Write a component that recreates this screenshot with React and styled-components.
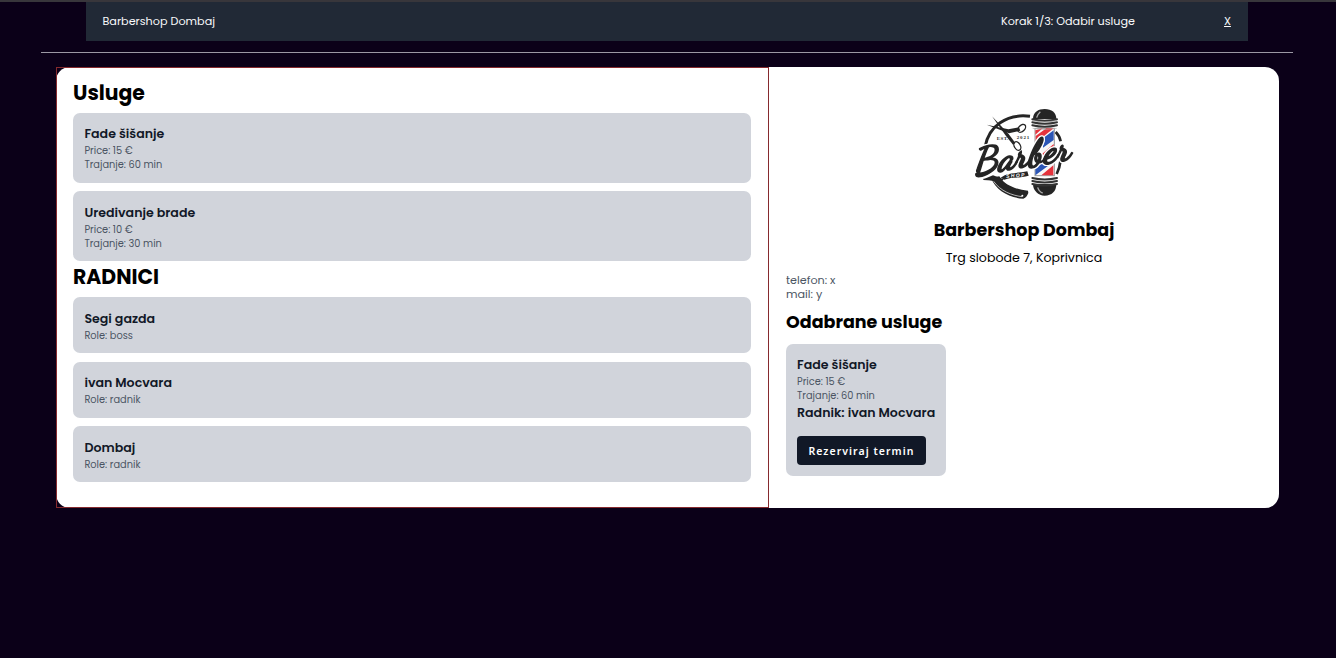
import React from "react";
import styled, { createGlobalStyle } from "styled-components";

const GlobalStyle = createGlobalStyle`
  * { box-sizing: border-box; margin: 0; padding: 0; }
  body {
    background: #0b0018;
    font-family: Poppins, "Open Sans", sans-serif;
    color: #000;
  }
`;

const Page = styled.div`
  display: flex;
  flex-direction: column;
  min-height: 658px;
  border-top: 2px solid #38363b;
`;

const Navbar = styled.nav`
  display: flex;
  align-items: center;
  width: 1162px;
  height: 39px;
  margin-left: 86px;
  padding: 0 16px 0 16.5px;
  background: #212936;
  color: #f9fafb;
  font-size: 11.2px;
  white-space: nowrap;
`;

const Step = styled.div`
  width: 223px;
  margin-left: auto;
`;

const Close = styled.a`
  width: 8px;
  text-decoration: underline;
`;

const Divider = styled.hr`
  width: 1252px;
  height: 1px;
  margin: 11px 0 14px 41px;
  border: 0;
  background: #9c98a4;
`;

const Panel = styled.main`
  display: flex;
  width: 1223px;
  height: 441.4px;
  margin-left: 56px;
  border-radius: 14px;
  background: #fff;
`;

const Choices = styled.section`
  width: 713px;
  padding: 10px 17px 0 16px;
  border: 1px solid #862a2e;
`;

const SectionTitle = styled.h2`
  height: 28px;
  margin-bottom: 7px;
  padding-top: 0.6px;
  font-size: 20.4px;
  line-height: 28px;
  font-weight: 700;
`;

const List = styled.div`
  display: flex;
  flex-direction: column;
  gap: 8.4px;
  margin-bottom: 1px;
`;

const Card = styled.article`
  padding: 11.4px 11.4px 10.6px;
  border-radius: 7px;
  background: #d1d4db;
`;

const CardTitle = styled.h3`
  font-size: 12.6px;
  line-height: 20px;
  font-weight: 600;
  color: #111827;
  white-space: nowrap;
`;

const Detail = styled.p`
  font-size: 9.8px;
  line-height: 14px;
  color: #4b5563;
`;

const Contact = styled(Detail)`
  font-size: 11.2px;
`;

const Summary = styled.section`
  flex: 1;
  display: flex;
  flex-direction: column;
  padding: 33px 0 0 17px;
`;

const Intro = styled.header`
  display: flex;
  flex-direction: column;
  align-items: center;
  padding-right: 17px;
`;

const ShopName = styled.h1`
  margin-top: 11px;
  font-size: 17.5px;
  line-height: 28px;
  font-weight: 700;
`;

const Address = styled.p`
  margin-top: 5px;
  margin-bottom: 6px;
  font-size: 12.6px;
  line-height: 18px;
`;

const Chosen = styled.h2`
  margin: 7px 0 8px;
  font-size: 17.5px;
  line-height: 28px;
  font-weight: 700;
`;

const BookingCard = styled(Card)`
  width: 160px;
  height: 132px;
  padding: 11px;
`;

const BookButton = styled.button`
  display: block;
  width: 129px;
  height: 29px;
  margin-top: 13px;
  border: 0;
  border-radius: 4px;
  background: #111827;
  color: #fff;
  font: 600 10.5px "Noto Sans", sans-serif;
  letter-spacing: 1.05px;
`;

const Wordmark = styled.g`
  filter: drop-shadow(3px 0 0 #fff) drop-shadow(-3px 0 0 #fff)
    drop-shadow(0 3px 0 #fff) drop-shadow(0 -3px 0 #fff);
`;

const Logo = () => (
  <svg width="130" height="105" viewBox="0 0 390 315" fill="none">
    <path d="M78 142 C88 78 144 40 213 49" stroke="#252525" strokeWidth="9" />
    <path d="M305 180 C303 198 299 210 293 222 M290 96 Q302 108 305 124" stroke="#252525" strokeWidth="8" />
    <path d="M222 57 C222 36 238 27 257 27 C278 27 292 38 292 57Z" fill="#252525" />
    <path d="M244 35 Q236 42 233 53" stroke="#aaa" strokeWidth="4" />
    <path d="M222 252 C222 272 238 287 257 287 C278 287 292 274 292 252Z" fill="#252525" />
    <path d="M236 262 Q240 275 251 279" stroke="#aaa" strokeWidth="4" />
    <rect x="228" y="85" width="58" height="142" fill="#f7f7f7" stroke="#999" strokeWidth="3" />
    <path d="M229 91 L251 85 L229 104Z M262 85 L284 85 L230 128 L230 108Z M229 179 L284 132 L284 145 L229 190Z M283 196 L283 226 L247 226Z" fill="#e5333c" />
    <path d="M284 91 V120 L252 143 V115Z M229 203 L250 188 L282 187 L229 226Z" fill="#2b55b5" />
    {[58, 67, 76, 234, 243, 252].map((y) => (
      <path key={y} d={`M220 ${y} Q257 ${y + 9} 294 ${y}`} stroke="#333" strokeWidth="6" strokeLinecap="round" />
    ))}
    <path d="M221 85 Q257 92 293 85 M220 62 Q257 71 294 62" stroke="#aaa" strokeWidth="2" />
    <path d="M99 49 L149 102 L169 129 L162 134 L141 108Z" fill="#252525" />
    <path d="M83 74 L148 88 L180 82 L184 92 L150 100Z" fill="#252525" />
    <ellipse cx="188" cy="85" rx="14" ry="9" transform="rotate(-45 188 85)" stroke="#252525" strokeWidth="4" />
    <g fill="#333" fontFamily="Liberation Serif, serif" fontWeight="700" fontSize="15">
      <text x="113" y="119" textLength="35">EST.</text>
      <text x="173" y="118" textLength="38">2021</text>
    </g>
    <path d="M75 237 L102 226 L134 238 L126 247Z" fill="#252525" />
    <path d="M73 238 L111 240" stroke="#252525" strokeWidth="4" />
    <path d="M96 233 L121 229 C137 256 169 268 207 272 L208 279 C205 286 201 294 193 296 C150 294 110 270 96 233Z" fill="#252525" />
    <path d="M104 244 C124 273 158 286 189 290" stroke="#fff" strokeWidth="2" />
    <circle cx="190" cy="287" r="3" fill="#fff" />
    <path d="M125 233 C150 214 180 221 205 214 L209 227 C183 235 157 230 136 239Z" fill="#252525" />
    <text x="142" y="234" transform="rotate(-5 142 234)" fill="#fff" fontFamily="Liberation Sans, sans-serif" fontStyle="italic" fontWeight="700" fontSize="15" textLength="55">SHOP</text>
    <Wordmark>
      <text
        transform="translate(46 223) rotate(-9) skewX(-12)"
        fill="#252525"
        stroke="#252525"
        strokeWidth="4.5"
        strokeLinejoin="round"
        fontFamily="'Dancing Script', Lobster, 'Liberation Serif', serif"
        fontWeight="700"
        fontSize="110"
        textLength="292"
        lengthAdjust="spacingAndGlyphs"
      >
        Barber
      </text>
    </Wordmark>
    <ellipse cx="175" cy="138" rx="9" ry="14" transform="rotate(-30 175 138)" stroke="#252525" strokeWidth="4" />
    <path d="M183 148 Q190 151 187 158" stroke="#252525" strokeWidth="3" />
  </svg>
);

const services = [
  { name: "Fade šišanje", price: "Price: 15 €", time: "Trajanje: 60 min" },
  { name: "Uredivanje brade", price: "Price: 10 €", time: "Trajanje: 30 min" },
];

const workers = [
  { name: "Segi gazda", role: "Role: boss" },
  { name: "ivan Mocvara", role: "Role: radnik" },
  { name: "Dombaj", role: "Role: radnik" },
];

export default function App() {
  return (
    <Page>
      <GlobalStyle />
      <Navbar>
        <span>Barbershop Dombaj</span>
        <Step>Korak 1/3: Odabir usluge</Step>
        <Close>X</Close>
      </Navbar>
      <Divider />
      <Panel>
        <Choices>
          <SectionTitle>Usluge</SectionTitle>
          <List>
            {services.map((s) => (
              <Card key={s.name}>
                <CardTitle>{s.name}</CardTitle>
                <Detail>{s.price}</Detail>
                <Detail>{s.time}</Detail>
              </Card>
            ))}
          </List>
          <SectionTitle>RADNICI</SectionTitle>
          <List>
            {workers.map((w) => (
              <Card key={w.name}>
                <CardTitle>{w.name}</CardTitle>
                <Detail>{w.role}</Detail>
              </Card>
            ))}
          </List>
        </Choices>
        <Summary>
          <Intro>
            <Logo />
            <ShopName>Barbershop Dombaj</ShopName>
            <Address>Trg slobode 7, Koprivnica</Address>
          </Intro>
          <Contact>telefon: x</Contact>
          <Contact>mail: y</Contact>
          <Chosen>Odabrane usluge</Chosen>
          <BookingCard>
            <CardTitle>Fade šišanje</CardTitle>
            <Detail>Price: 15 €</Detail>
            <Detail>Trajanje: 60 min</Detail>
            <CardTitle>Radnik: ivan Mocvara</CardTitle>
            <BookButton>Rezerviraj termin</BookButton>
          </BookingCard>
        </Summary>
      </Panel>
    </Page>
  );
}
